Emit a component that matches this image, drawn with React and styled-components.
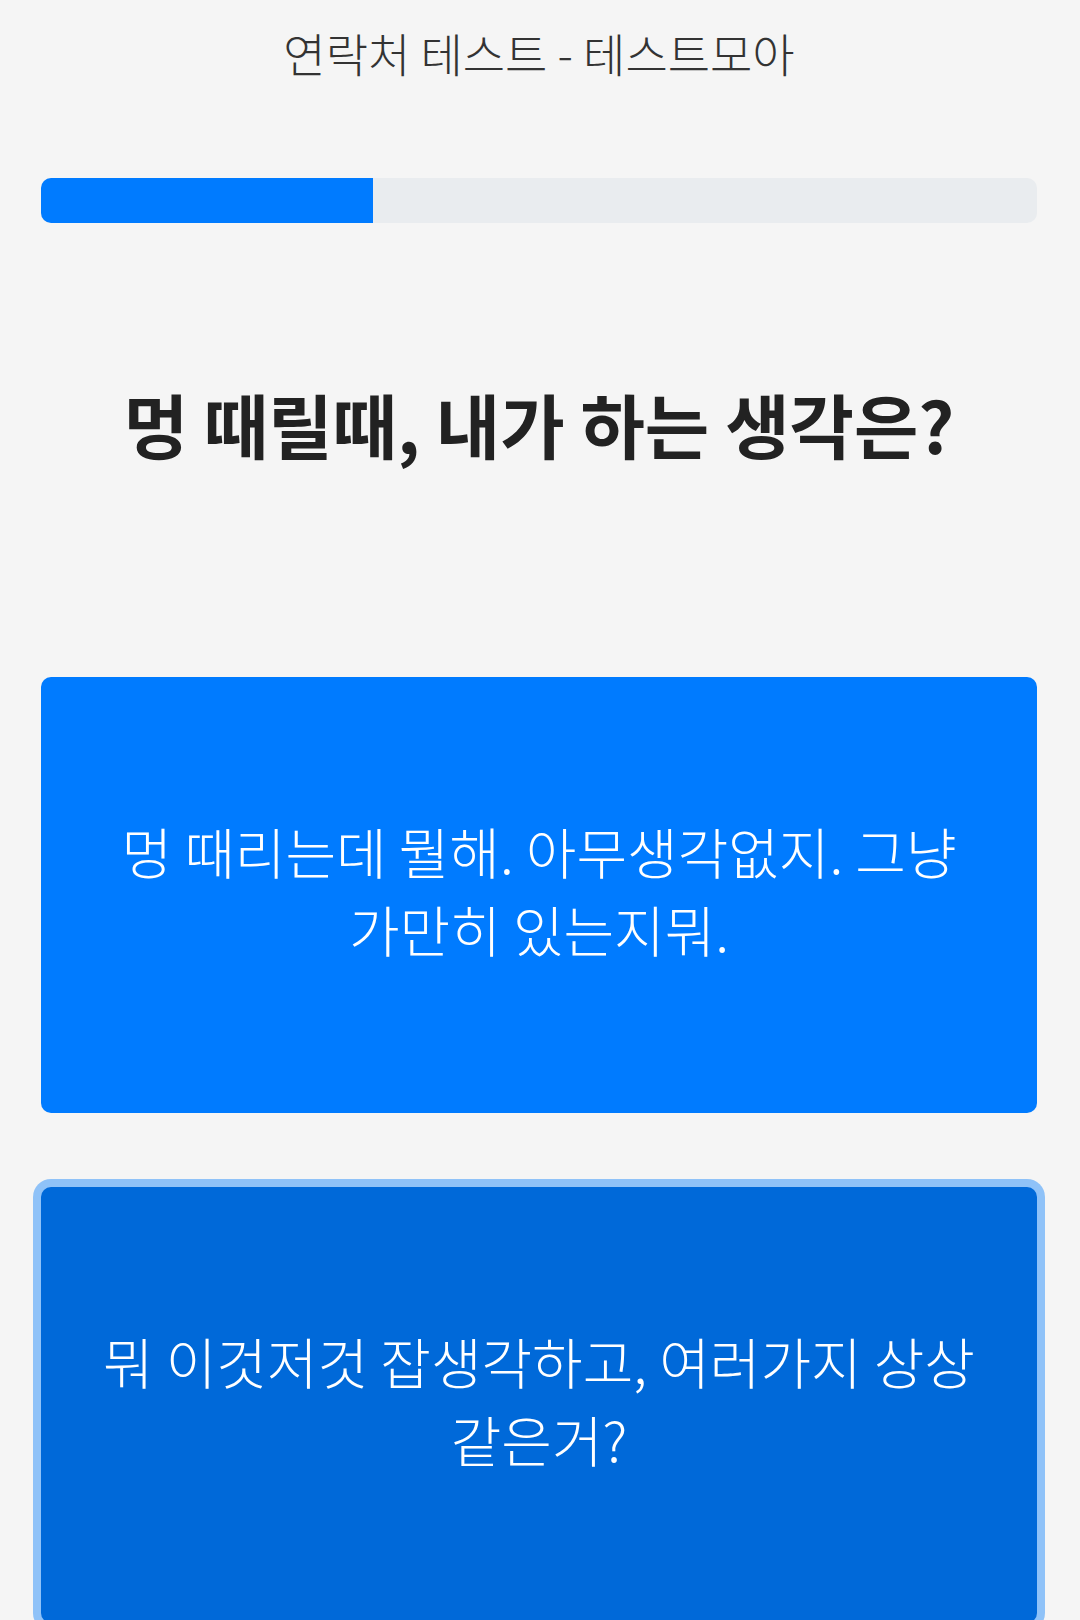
import React from 'react';
import styled, { createGlobalStyle } from 'styled-components';

const GlobalStyle = createGlobalStyle`
  html, body {
    margin: 0;
    padding: 0;
    background-color: #f5f5f5;
  }
  body {
    font-family: 'Noto Sans CJK KR', 'Noto Sans', sans-serif;
    color: #212529;
  }
`;

const Page = styled.div`
  width: 100%;
  min-height: 1620px;
  box-sizing: border-box;
  padding: 20px 43px 0 41px;
  display: flex;
  flex-direction: column;
  overflow: hidden;
`;

const Header = styled.h1`
  margin: 0;
  font-size: 46px;
  font-weight: 300;
  line-height: 64px;
  color: #333333;
  text-align: center;
`;

const Progress = styled.div`
  margin-top: 94px;
  height: 45px;
  background-color: #e9ecef;
  border-radius: 10px;
  overflow: hidden;
  display: flex;
`;

const ProgressFill = styled.div`
  background-color: #007bff;
  height: 100%;
`;

const Question = styled.h2`
  margin: 162px 0 0;
  font-size: 70px;
  font-weight: 700;
  line-height: 77px;
  color: #222222;
  text-align: center;
  word-break: keep-all;
`;

const Options = styled.div`
  margin-top: 215px;
  display: flex;
  flex-direction: column;
  gap: 74px;
`;

const Option = styled.button`
  width: 100%;
  box-sizing: border-box;
  min-height: 435px;
  padding: 134px 40px 146px;
  border: none;
  border-radius: 10px;
  background-color: ${p => (p.$active ? '#0069d9' : '#007bff')};
  box-shadow: ${p => (p.$active ? '0 0 0 8px #8fc2f8' : 'none')};
  color: #ffffff;
  font-family: 'Noto Sans CJK KR', 'Noto Sans', sans-serif;
  font-size: 55px;
  font-weight: 300;
  line-height: 78px;
  text-align: center;
  word-break: keep-all;
  cursor: pointer;
  outline: none;
`;

const answers = [
  '멍 때리는데 뭘해. 아무생각없지. 그냥 가만히 있는지뭐.',
  '뭐 이것저것 잡생각하고, 여러가지 상상 같은거?',
];

export default function App() {
  const step = 1;
  const total = 3;
  return (
    <>
      <GlobalStyle />
      <Page>
        <Header>연락처 테스트 - 테스트모아</Header>
        <Progress>
          <ProgressFill style={{ width: `${(step / total) * 100}%` }} />
        </Progress>
        <Question>멍 때릴때, 내가 하는 생각은?</Question>
        <Options>
          {answers.map((a, i) => (
            <Option key={i} $active={i === 1}>{a}</Option>
          ))}
        </Options>
      </Page>
    </>
  );
}
